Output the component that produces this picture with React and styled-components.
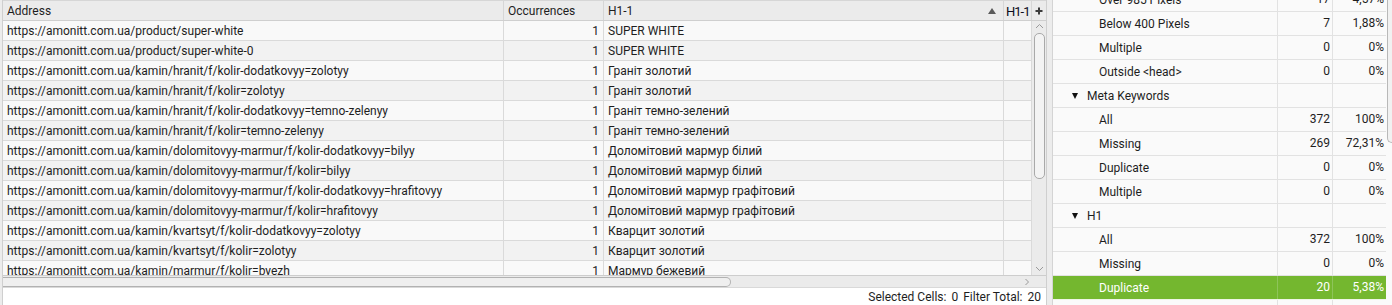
import React from "react";
import styled, { createGlobalStyle } from "styled-components";

const Global = createGlobalStyle`
  *, *::before, *::after { box-sizing: border-box; }
  html, body { margin: 0; padding: 0; }
  body {
    background: #ececec;
    font-family: Roboto, "Noto Sans", "Liberation Sans", sans-serif;
    font-size: 12px;
    color: #1e1e1e;
    overflow: hidden;
  }
`;

const Page = styled.div`
  display: flex;
  width: 1392px;
  height: 305px;
`;

/* ---------- left grid ---------- */
const LeftPanel = styled.section`
  flex: none;
  width: 1045px;
  margin-left: 2px;
  border-left: 1px solid #cfcfcf;
  border-right: 1px solid #cfcfcf;
  display: flex;
  flex-direction: column;
`;

const GridWrap = styled.div`
  display: flex;
  height: 287px;
`;

const TableCol = styled.div`
  width: 1029px;
  display: flex;
  flex-direction: column;
`;

const cols = "501px 100px 400px 28px";

const HeaderRow = styled.div`
  display: grid;
  grid-template-columns: ${cols};
  height: 21px;
  background: #ebebeb;
  border-top: 1px solid #d6d6d6;
  border-bottom: 1px solid #cfcfcf;
`;

const HeaderCell = styled.div`
  display: flex;
  align-items: center;
  justify-content: space-between;
  padding: 1px ${(p) => (p.$tight ? "0 0 2px" : "4px 0")};
  border-right: 1px solid #d6d6d6;
  white-space: nowrap;
  overflow: hidden;
  color: ${(p) => (p.$big ? "#0c0c1c" : "#1e1e1e")};
  font-size: ${(p) => (p.$big ? "13px" : "12px")};
  letter-spacing: ${(p) => (p.$big ? "-1px" : "normal")};
`;

const SortUp = styled.span`
  width: 0;
  height: 0;
  margin-right: 3px;
  border-left: 4px solid transparent;
  border-right: 4px solid transparent;
  border-bottom: 6px solid #5a5a5a;
`;

const Body = styled.div`
  height: 254px;
  overflow: hidden;
`;

const Row = styled.div`
  display: grid;
  grid-template-columns: ${cols};
  height: 20px;
  border-bottom: 1px solid #dadada;
  background: ${(p) => (p.$alt ? "#f2f2f2" : "#f9f9f9")};
`;

const Cell = styled.div`
  padding: 0 4px;
  line-height: 21px;
  white-space: nowrap;
  overflow: hidden;
  text-align: ${(p) => (p.$right ? "right" : "left")};
  border-right: 1px solid #dadada;
`;

const HScroll = styled.div`
  height: 12px;
  display: flex;
  align-items: center;
  justify-content: space-between;
  background: #ebebeb;
  border-top: 1px solid #cdcdcd;
  padding-right: 2px;
`;

const HThumb = styled.div`
  width: 728px;
  height: 10px;
  border: 1px solid #b2b2b2;
  border-left: none;
  border-radius: 0 5px 5px 0;
  background: #efefef;
`;

const VScrollCol = styled.div`
  width: 14px;
  display: flex;
  flex-direction: column;
  background: #ebebeb;
`;

const PlusCell = styled.div`
  height: 21px;
  display: flex;
  align-items: center;
  justify-content: center;
  border-top: 1px solid #d6d6d6;
  border-bottom: 1px solid #cfcfcf;
`;

const VTrack = styled.div`
  height: 254px;
  display: flex;
  flex-direction: column;
  align-items: center;
  padding: 2px 0 3px;
`;

const VThumb = styled.div`
  width: 11px;
  height: 146px;
  margin-top: 4px;
  margin-left: 1px;
  border: 1px solid #a9a9a9;
  border-radius: 5px;
  background: #f3f3f3;
`;

const Spacer = styled.div`
  flex: 1;
`;

const Corner = styled.div`
  height: 12px;
  border-top: 1px solid #cdcdcd;
`;

const StatusBar = styled.footer`
  height: 18px;
  display: flex;
  justify-content: flex-end;
  align-items: center;
  gap: 5px;
  padding-right: 5px;
  background: #ffffff;
  border-top: 1px solid #d9d9d9;
  color: #1e1e1e;
`;

const Stat = styled.span`
  display: flex;
  gap: 5px;
`;

/* ---------- right overview ---------- */
const RightPanel = styled.section`
  flex: 1;
  margin-left: 5px;
  border-left: 1px solid #d4d4d4;
  display: flex;
  overflow: hidden;
  background: #fafafa;
`;

const RTable = styled.div`
  flex: 1;
  display: flex;
  flex-direction: column;
  margin-top: -12px;
`;

const rcols = "225px 55px 53px";

const RRow = styled.div`
  display: grid;
  grid-template-columns: ${rcols};
  height: 24px;
  flex: none;
  border-bottom: 1px solid ${(p) => (p.$sel ? "#eef5e6" : "#e2e2e2")};
  background: ${(p) => (p.$sel ? "#74b72f" : "#fafafa")};
  color: ${(p) => (p.$sel ? "#ffffff" : "#1e1e1e")};
`;

const RLabel = styled.div`
  display: flex;
  align-items: center;
  gap: 9px;
  padding-left: ${(p) => (p.$group ? "19px" : "46px")};
  white-space: nowrap;
  border-right: 1px solid ${(p) => (p.$sel ? "#8ec45a" : "#e2e2e2")};
`;

const RNum = styled.div`
  line-height: 23px;
  text-align: right;
  padding-right: 2px;
  border-right: ${(p) =>
    p.$last ? "none" : `1px solid ${p.$sel ? "#8ec45a" : "#e2e2e2"}`};
`;

const Caret = styled.span`
  width: 0;
  height: 0;
  border-left: 3.5px solid transparent;
  border-right: 3.5px solid transparent;
  border-top: 6px solid #111;
`;

const RScroll = styled.div`
  width: 6px;
  flex: none;
  background: #fafafa;
  padding-left: 1px;
`;

const RThumb = styled.div`
  height: 143px;
  border-left: 1px solid #b8b8b8;
  border-bottom: 1px solid #b8b8b8;
  border-bottom-left-radius: 5px;
  background: #f1f1f1;
`;

const Chevron = ({ dir }) => {
  const paths = {
    up: "M1 5 L4.5 1.5 L8 5",
    down: "M1 1 L4.5 4.5 L8 1",
    right: "M1.5 1 L4.5 4 L1.5 7",
  };
  const size = dir === "right" ? { w: 6, h: 8 } : { w: 9, h: 6 };
  return (
    <svg width={size.w} height={size.h} viewBox={`0 0 ${size.w} ${size.h}`}>
      <path d={paths[dir]} fill="none" stroke="#9a9a9a" strokeWidth="1" />
    </svg>
  );
};

const Plus = () => (
  <svg width="8" height="8" viewBox="0 0 8 8">
    <path d="M4 0.5 V7.5 M0.5 4 H7.5" stroke="#3c3c3c" strokeWidth="2" />
  </svg>
);

const rows = [
  ["https://amonitt.com.ua/product/super-white", "SUPER WHITE"],
  ["https://amonitt.com.ua/product/super-white-0", "SUPER WHITE"],
  ["https://amonitt.com.ua/kamin/hranit/f/kolir-dodatkovyy=zolotyy", "Граніт золотий"],
  ["https://amonitt.com.ua/kamin/hranit/f/kolir=zolotyy", "Граніт золотий"],
  ["https://amonitt.com.ua/kamin/hranit/f/kolir-dodatkovyy=temno-zelenyy", "Граніт темно-зелений"],
  ["https://amonitt.com.ua/kamin/hranit/f/kolir=temno-zelenyy", "Граніт темно-зелений"],
  ["https://amonitt.com.ua/kamin/dolomitovyy-marmur/f/kolir-dodatkovyy=bilyy", "Доломітовий мармур білий"],
  ["https://amonitt.com.ua/kamin/dolomitovyy-marmur/f/kolir=bilyy", "Доломітовий мармур білий"],
  ["https://amonitt.com.ua/kamin/dolomitovyy-marmur/f/kolir-dodatkovyy=hrafitovyy", "Доломітовий мармур графітовий"],
  ["https://amonitt.com.ua/kamin/dolomitovyy-marmur/f/kolir=hrafitovyy", "Доломітовий мармур графітовий"],
  ["https://amonitt.com.ua/kamin/kvartsyt/f/kolir-dodatkovyy=zolotyy", "Кварцит золотий"],
  ["https://amonitt.com.ua/kamin/kvartsyt/f/kolir=zolotyy", "Кварцит золотий"],
  ["https://amonitt.com.ua/kamin/marmur/f/kolir=byezh", "Мармур бежевий"],
];

const overview = [
  { label: "Over 985 Pixels", n: "17", p: "4,57%" },
  { label: "Below 400 Pixels", n: "7", p: "1,88%" },
  { label: "Multiple", n: "0", p: "0%" },
  { label: "Outside <head>", n: "0", p: "0%" },
  { label: "Meta Keywords", group: true },
  { label: "All", n: "372", p: "100%" },
  { label: "Missing", n: "269", p: "72,31%" },
  { label: "Duplicate", n: "0", p: "0%" },
  { label: "Multiple", n: "0", p: "0%" },
  { label: "H1", group: true },
  { label: "All", n: "372", p: "100%" },
  { label: "Missing", n: "0", p: "0%" },
  { label: "Duplicate", n: "20", p: "5,38%", sel: true },
  { label: "Multiple", n: "0", p: "0%" },
];

export default function App() {
  return (
    <>
      <Global />
      <Page>
        <LeftPanel>
          <GridWrap>
            <TableCol>
              <HeaderRow>
                <HeaderCell>Address</HeaderCell>
                <HeaderCell>Occurrences</HeaderCell>
                <HeaderCell>
                  H1-1
                  <SortUp />
                </HeaderCell>
                <HeaderCell $big $tight>H1-1</HeaderCell>
              </HeaderRow>
              <Body>
                {rows.map(([url, h1], i) => (
                  <Row key={i} $alt={i % 2 === 1}>
                    <Cell>{url}</Cell>
                    <Cell $right>1</Cell>
                    <Cell>{h1}</Cell>
                    <Cell />
                  </Row>
                ))}
              </Body>
              <HScroll>
                <HThumb />
                <Chevron dir="right" />
              </HScroll>
            </TableCol>
            <VScrollCol>
              <PlusCell>
                <Plus />
              </PlusCell>
              <VTrack>
                <Chevron dir="up" />
                <VThumb />
                <Spacer />
                <Chevron dir="down" />
              </VTrack>
              <Corner />
            </VScrollCol>
          </GridWrap>
          <StatusBar>
            <Stat>
              <span>Selected Cells:</span>
              <span>0</span>
            </Stat>
            <Stat>
              <span>Filter Total:</span>
              <span>20</span>
            </Stat>
          </StatusBar>
        </LeftPanel>
        <RightPanel>
          <RTable>
            {overview.map((r, i) => (
              <RRow key={i} $sel={r.sel}>
                <RLabel $group={r.group} $sel={r.sel}>
                  {r.group && <Caret />}
                  <span>{r.label}</span>
                </RLabel>
                <RNum $sel={r.sel}>{r.n}</RNum>
                <RNum $sel={r.sel} $last>
                  {r.p}
                </RNum>
              </RRow>
            ))}
          </RTable>
          <RScroll>
            <RThumb />
          </RScroll>
        </RightPanel>
      </Page>
    </>
  );
}
